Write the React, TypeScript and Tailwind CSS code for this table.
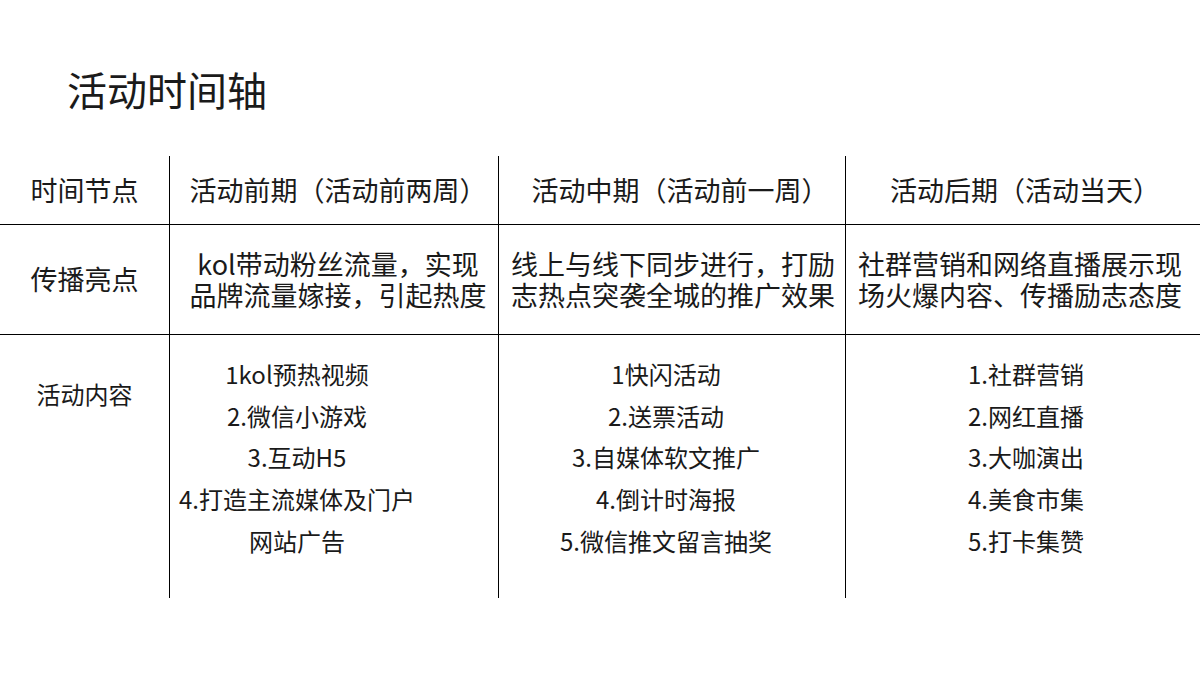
const header = [
  { text: '时间节点', shift: '' },
  { text: '活动前期（活动前两周）', shift: 'pl-[8px]' },
  { text: '活动中期（活动前一周）', shift: 'pl-[16px]' },
  { text: '活动后期（活动当天）', shift: 'pl-[4px]' },
];

const highlights = [
  { shift: 'pl-[8px]', lines: ['kol带动粉丝流量，实现', '品牌流量嫁接，引起热度'] },
  { shift: 'pl-[2px]', lines: ['线上与线下同步进行，打励', '志热点突袭全城的推广效果'] },
  { shift: 'pr-[6px]', lines: ['社群营销和网络直播展示现', '场火爆内容、传播励志态度'] },
];

// each list column sits a little off-centre in the original
const contents = [
  { shift: 'pr-[74px]', items: ['1kol预热视频', '2.微信小游戏', '3.互动H5', '4.打造主流媒体及门户', '网站广告'] },
  { shift: 'pr-[12px]', items: ['1快闪活动', '2.送票活动', '3.自媒体软文推广', '4.倒计时海报', '5.微信推文留言抽奖'] },
  { shift: 'pl-[6px]', items: ['1.社群营销', '2.网红直播', '3.大咖演出', '4.美食市集', '5.打卡集赞'] },
];

export default function App() {
  return (
    <div
      className="h-[675px] w-[1200px] overflow-hidden bg-white text-[#1a1a1a]"
      style={{ fontFamily: '"Noto Sans CJK SC", "Microsoft YaHei", sans-serif' }}
    >
      <h1 className="pl-[67px] pt-[65px] text-[40px] leading-[48px] font-normal">活动时间轴</h1>

      <div className="mt-[43px] grid grid-cols-[169px_329px_347px_355px] grid-rows-[69px_110px_263px]">
        {header.map((h, i) => (
          <div
            key={h.text}
            className={`flex items-center justify-center border-b border-black text-[27px] ${i > 0 ? 'border-l' : ''} ${h.shift}`}
          >
            {h.text}
          </div>
        ))}

        <div className="flex items-center justify-center border-b border-black text-[27px]">传播亮点</div>
        {highlights.map((col, i) => (
          <div
            key={i}
            className={`flex flex-col items-center justify-center border-b border-l border-black pb-[2px] text-[27px] leading-[31px] ${col.shift}`}
          >
            {col.lines.map((l) => (
              <div key={l}>{l}</div>
            ))}
          </div>
        ))}

        <div className="flex justify-center pt-[43px] text-[24px] leading-[32px]">活动内容</div>
        {contents.map((col, i) => (
          <div
            key={i}
            className={`flex flex-col items-center border-l border-black pt-[18px] text-[24px] leading-[41.7px] ${col.shift}`}
          >
            {col.items.map((t) => (
              <div key={t}>{t}</div>
            ))}
          </div>
        ))}
      </div>
    </div>
  );
}
